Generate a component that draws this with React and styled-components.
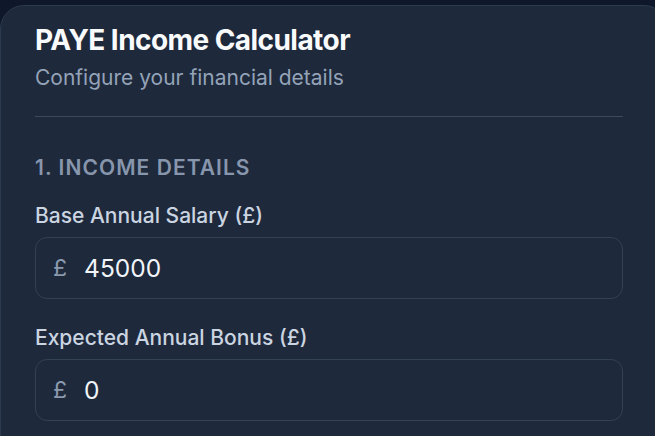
import React from "react";
import styled, { createGlobalStyle } from "styled-components";

const Global = createGlobalStyle`
  html, body { margin: 0; padding: 0; background: #0f172a; }
  body { font-family: Inter, "Noto Sans", sans-serif; overflow: hidden; }
  * { box-sizing: border-box; }
`;

const Page = styled.div`
  width: 655px;
  height: 436px;
  padding-top: 5px;
  overflow: hidden;
`;

const Card = styled.section`
  width: 668px;
  min-height: 470px;
  background: #1e293b;
  border: 1px solid #2c3a4f;
  border-radius: 24px;
  padding: 16px 44px 0 34px;
  display: flex;
  flex-direction: column;
`;

const Header = styled.header`
  padding-bottom: 24px;
  border-bottom: 1px solid #3b4a5e;
`;

const Title = styled.h1`
  margin: 0;
  font-size: 28px;
  line-height: 36px;
  font-weight: 700;
  letter-spacing: -0.02em;
  color: #f8fafc;
`;

const Subtitle = styled.p`
  margin: 6px 0 0;
  font-size: 21px;
  line-height: 28px;
  color: #94a3b8;
`;

const Section = styled.div`
  padding-top: 37px;
  display: flex;
  flex-direction: column;
`;

const SectionTitle = styled.h2`
  margin: 0 0 20px;
  font-size: 21px;
  line-height: 28px;
  font-weight: 600;
  letter-spacing: 0.05em;
  text-transform: uppercase;
  color: #8796ac;
`;

const Field = styled.div`
  display: flex;
  flex-direction: column;
  gap: 7px;
  margin-bottom: 25px;
`;

const Label = styled.label`
  font-size: 21px;
  line-height: 28px;
  font-weight: 500;
  color: #cbd5e1;
`;

const InputWrap = styled.div`
  height: 62px;
  display: flex;
  align-items: center;
  gap: 17px;
  padding: 0 17px;
  border: 1px solid #334155;
  border-radius: 12px;
  background: #1e293b;
`;

const Currency = styled.span`
  font-size: 23px;
  line-height: 1;
  color: #8a99ae;
`;

const Input = styled.input`
  flex: 1;
  min-width: 0;
  border: 0;
  outline: none;
  background: transparent;
  font-family: inherit;
  font-size: 24.5px;
  color: #f1f5f9;
  padding: 0;
`;

const fields = [
  { id: "salary", label: "Base Annual Salary (£)", value: "45000" },
  { id: "bonus", label: "Expected Annual Bonus (£)", value: "0" },
];

export default function App() {
  return (
    <>
      <Global />
      <Page>
        <Card>
          <Header>
            <Title>PAYE Income Calculator</Title>
            <Subtitle>Configure your financial details</Subtitle>
          </Header>
          <Section>
            <SectionTitle>1. Income Details</SectionTitle>
            {fields.map((f) => (
              <Field key={f.id}>
                <Label htmlFor={f.id}>{f.label}</Label>
                <InputWrap>
                  <Currency>£</Currency>
                  <Input id={f.id} defaultValue={f.value} />
                </InputWrap>
              </Field>
            ))}
          </Section>
        </Card>
      </Page>
    </>
  );
}
